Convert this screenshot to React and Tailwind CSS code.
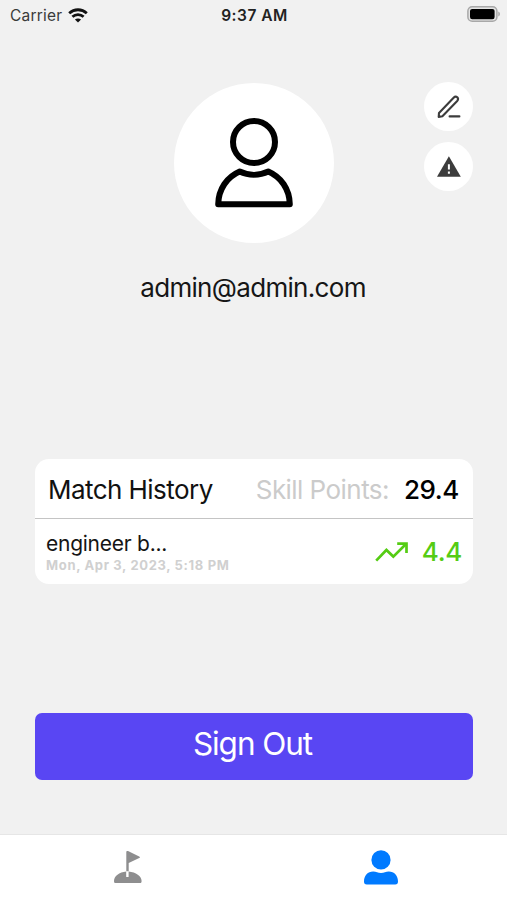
const matches = [
  { id: 1, name: 'engineer b...', date: 'Mon, Apr 3, 2023, 5:18 PM', change: '4.4' },
];

const WifiIcon = () => (
  <svg viewBox="0 0 20 15" className="w-5 h-[15px]" fill="none" stroke="#111" strokeWidth="2.8">
    <path d="M1.2 5.2C6.2.6 13.8.6 18.8 5.2" />
    <path d="M4.4 8.8C7.6 5.9 12.4 5.9 15.6 8.8" />
    <path d="M10 14.5 6.9 11.5C8.7 10 11.3 10 13.1 11.5Z" fill="#111" stroke="none" />
  </svg>
);

const BatteryIcon = () => (
  <svg viewBox="0 0 34 16" className="w-[34px] h-4">
    <rect x="0.9" y="0.8" width="29" height="14.4" rx="4.3" fill="#e4e4e4" stroke="#a8a8a8" strokeWidth="1.5" />
    <rect x="3" y="2.9" width="24.6" height="10.3" rx="2.2" fill="#000" />
    <path d="M31.3 5.5C33.4 6.2 33.4 9.8 31.3 10.5Z" fill="#a3a3a3" />
  </svg>
);

const AvatarIcon = () => (
  <svg viewBox="0 0 160 160" className="w-40 h-40" fill="none" stroke="#000" strokeWidth="6" strokeLinejoin="round">
    <circle cx="80" cy="59" r="21" />
    <path d="M44.2 121.2H115.8C115.5 106 107 94 94.3 88.5C85.5 92.7 74.5 92.7 65.7 88.5C53 94 44.5 106 44.2 121.2Z" />
  </svg>
);

const EditIcon = () => (
  <svg viewBox="0 0 26 26" className="w-[26px] h-[26px]" fill="none" stroke="#3c3c3c" strokeWidth="2.1" strokeLinecap="round" strokeLinejoin="round">
    <path d="M2.7 22.9 3 18.9 17.6 3.7C18.8 2.5 20.2 2.4 21.3 3.3C22.3 4.4 22.3 5.8 21.2 7L6.4 22.2Z" />
    <path d="M13.6 22.4H23.4" />
  </svg>
);

const WarningIcon = () => (
  <svg viewBox="0 0 26 24" className="w-[26px] h-6">
    <path d="M12.9 1.2 24.8 21.8H1Z" fill="#3c3c3c" />
    <path d="M12.9 9.2V14.4M12.9 16.4V18.8" stroke="#fff" strokeWidth="2" />
  </svg>
);

const TrendIcon = () => (
  <svg viewBox="0 0 34 20" className="w-[34px] h-5" fill="none" stroke="#55cc14" strokeWidth="2.7">
    <path d="M1.2 18.6 11.4 8 18.3 14.6 31 2" />
    <path d="M22.2 1.6H31.5V11" />
  </svg>
);

const GolfIcon = () => (
  <svg viewBox="0 0 30 34" className="w-[30px] h-[34px]" fill="#8e8e8f">
    <path d="M1 31C1 26.2 6.2 22.2 13.2 21.5V27H15.6V21.5C22.8 22.2 28.6 26.2 28.6 31C28.6 32.6 28 33.1 26.8 33.1H2.8C1.6 33.1 1 32.6 1 31Z" />
    <path d="M13.3 2C13.3 1 14.2.7 15 1L26.2 6.4C27.2 6.9 27.2 7.5 26.2 8L15.7 13V21.2H13.3Z" />
  </svg>
);

const ProfileIcon = () => (
  <svg viewBox="0 0 36 36" className="w-9 h-9" fill="#007aff">
    <circle cx="18" cy="9.9" r="9.6" />
    <path d="M1 31.6C1 25.6 4.8 21.6 10.2 21.6C13.2 21.6 14.8 23 18 23C21.2 23 22.8 21.6 25.8 21.6C31.2 21.6 35 25.6 35 31.6C35 33.6 34.2 34.5 32.2 34.5H3.8C1.8 34.5 1 33.6 1 31.6Z" />
  </svg>
);

const StatusBar = () => (
  <div className="grid grid-cols-3 items-center h-[30px] pl-2.5 pr-[6px]">
    <div className="flex items-center gap-[6px]">
      <span className="pt-px text-[15.5px] tracking-[0.2px] text-[#3a3a3a]">Carrier</span>
      <WifiIcon />
    </div>
    <span className="pt-px pr-0.5 text-center text-[15.5px] font-semibold tracking-[0.5px] whitespace-nowrap text-[#222]">9:37 AM</span>
    <div className="flex justify-end pb-0.5">
      <BatteryIcon />
    </div>
  </div>
);

const ProfileHeader = () => (
  <section className="mt-[52px]">
    <div className="grid grid-cols-[1fr_160px_1fr]">
      <div className="col-start-2 mt-px rounded-full bg-white w-40 h-40">
        <AvatarIcon />
      </div>
      <div className="flex flex-col items-end gap-[11px]">
        <button className="flex items-center justify-center w-[49px] h-[49px] rounded-full bg-white">
          <EditIcon />
        </button>
        <button className="flex items-center justify-center w-[49px] h-[49px] rounded-full bg-white">
          <WarningIcon />
        </button>
      </div>
    </div>
    <h1 className="mt-[29px] pr-0.5 text-center text-[26px] leading-8 tracking-[-0.68px] text-[#161616]">admin@admin.com</h1>
  </section>
);

const MatchHistory = () => (
  <section className="mt-[155px] h-[125px] rounded-[14px] bg-white overflow-hidden">
    <div className="flex items-center justify-between h-[60px] pt-px pl-[13px] pr-3.5 border-b border-[#c4c4c4] text-[26px] whitespace-nowrap">
      <h2 className="tracking-[-0.55px] text-[#111]">Match History</h2>
      <div className="flex gap-[15px]">
        <span className="tracking-[-0.55px] text-[#cbcbcb]">Skill Points:</span>
        <span className="font-medium tracking-[-0.4px] text-black">29.4</span>
      </div>
    </div>
    {matches.map((match) => (
      <div key={match.id} className="flex items-center justify-between h-[65px] px-[11px]">
        <div>
          <p className="text-[21px] leading-[26px] tracking-[-0.25px] text-[#151515]">{match.name}</p>
          <p className="text-[13px] leading-4 font-bold tracking-[0.65px] text-[#d0d0d0]">{match.date}</p>
        </div>
        <div className="flex items-center gap-[13px]">
          <TrendIcon />
          <span className="text-[26px] font-medium tracking-[-0.3px] text-[#55cc14]">{match.change}</span>
        </div>
      </div>
    ))}
  </section>
);

const TabBar = () => (
  <nav className="grid grid-cols-2 h-[66px] pl-0.5 border-t border-[#e6e6e6] bg-white">
    <button className="flex justify-center pt-[15px]">
      <GolfIcon />
    </button>
    <button className="flex justify-center pt-[15px]">
      <ProfileIcon />
    </button>
  </nav>
);

export default function App() {
  return (
    <div className="flex flex-col w-full h-[900px] bg-[#f1f1f1] font-['Inter',sans-serif] overflow-hidden">
      <StatusBar />
      <main className="flex-1 pl-[35px] pr-[34px]">
        <ProfileHeader />
        <MatchHistory />
        <button className="mt-[129px] w-full h-[67px] pb-1.5 pr-[3px] rounded-[7px] bg-[#5946f3] text-[31.5px] tracking-[-1.05px] text-white">
          Sign Out
        </button>
      </main>
      <TabBar />
    </div>
  );
}
